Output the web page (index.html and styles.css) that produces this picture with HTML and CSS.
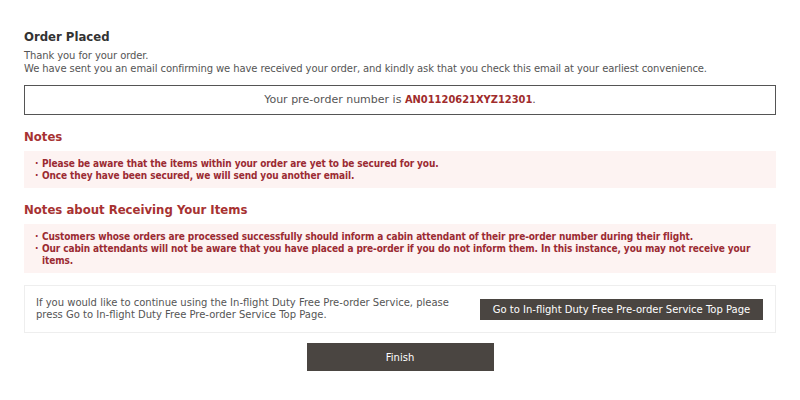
FILE: index.html
```html
<!DOCTYPE html>
<html lang="en">
<head>
    <meta charset="UTF-8">
    <meta name="viewport" content="width=device-width, initial-scale=1.0">
    <title>Order Placed</title>
    <link rel="stylesheet" href="styles.css">
</head>
<body>
    <div class="page">
        <h1>Order Placed</h1>
        <p class="lead">Thank you for your order.<br>We have sent you an email confirming we have received your order, and kindly ask that you check this email at your earliest convenience.</p>

        <div class="number-box">Your pre-order number is <strong>AN01120621XYZ12301</strong>.</div>

        <h2>Notes</h2>
        <ul class="notes">
            <li>Please be aware that the items within your order are yet to be secured for you.</li>
            <li>Once they have been secured, we will send you another email.</li>
        </ul>

        <h2>Notes about Receiving Your Items</h2>
        <ul class="notes">
            <li>Customers whose orders are processed successfully should inform a cabin attendant of their pre-order number during their flight.</li>
            <li>Our cabin attendants will not be aware that you have placed a pre-order if you do not inform them. In this instance, you may not receive your items.</li>
        </ul>

        <div class="continue-box">
            <p>If you would like to continue using the In-flight Duty Free Pre-order Service, please press Go to In-flight Duty Free Pre-order Service Top Page.</p>
            <button class="dark-button top-button">Go to In-flight Duty Free Pre-order Service Top Page</button>
        </div>

        <div class="finish-row">
            <button class="dark-button finish-button">Finish</button>
        </div>
    </div>
</body>
</html>
```

FILE: styles.css
```css
body {
    font-family: "DejaVu Sans", Verdana, sans-serif;
    margin: 0;
    background-color: white;
    color: #555;
    font-size: 10px;
}
.page {
    padding: 28px 24px 0 24px;
}
h1, h2, .notes, .number-box strong {
    font-family: "DejaVu Sans Condensed", "DejaVu Sans", sans-serif;
}
h1 {
    font-size: 13px;
    color: #333;
    margin: 0 0 4px 0;
    line-height: 17px;
}
.lead {
    margin: 0;
    line-height: 13px;
    letter-spacing: -0.1px;
}
.number-box {
    margin-top: 10px;
    border: 1px solid #555;
    height: 28px;
    line-height: 28px;
    text-align: center;
    font-size: 11px;
}
.number-box strong {
    color: #a02c2c;
}
h2 {
    color: #a73232;
    font-size: 13px;
    margin: 14px 0 6px 0;
    line-height: 16px;
}
.notes {
    list-style: none;
    margin: 0;
    padding: 7px 10px 6px 11px;
    background-color: #fdf3f2;
    color: #9b2b32;
    font-weight: bold;
    line-height: 12px;
    letter-spacing: -0.1px;
}
.notes li {
    padding-left: 7px;
    position: relative;
}
.notes li:before {
    content: "·";
    position: absolute;
    left: 0;
}
.continue-box {
    margin-top: 12px;
    border: 1px solid #eee;
    display: flex;
    align-items: center;
    justify-content: space-between;
    padding: 11px 12px 11px 11px;
    gap: 20px;
}
.continue-box p {
    margin: 0;
    width: 430px;
    line-height: 12px;
}
.dark-button {
    background-color: #4a4541;
    color: white;
    border: none;
    font-family: inherit;
    font-size: 10px;
    cursor: pointer;
}
.top-button {
    width: 287px;
    height: 21px;
    padding: 0;
    white-space: nowrap;
}
.finish-row {
    display: flex;
    justify-content: center;
    margin-top: 10px;
}
.finish-button {
    width: 187px;
    height: 28px;
}
```
